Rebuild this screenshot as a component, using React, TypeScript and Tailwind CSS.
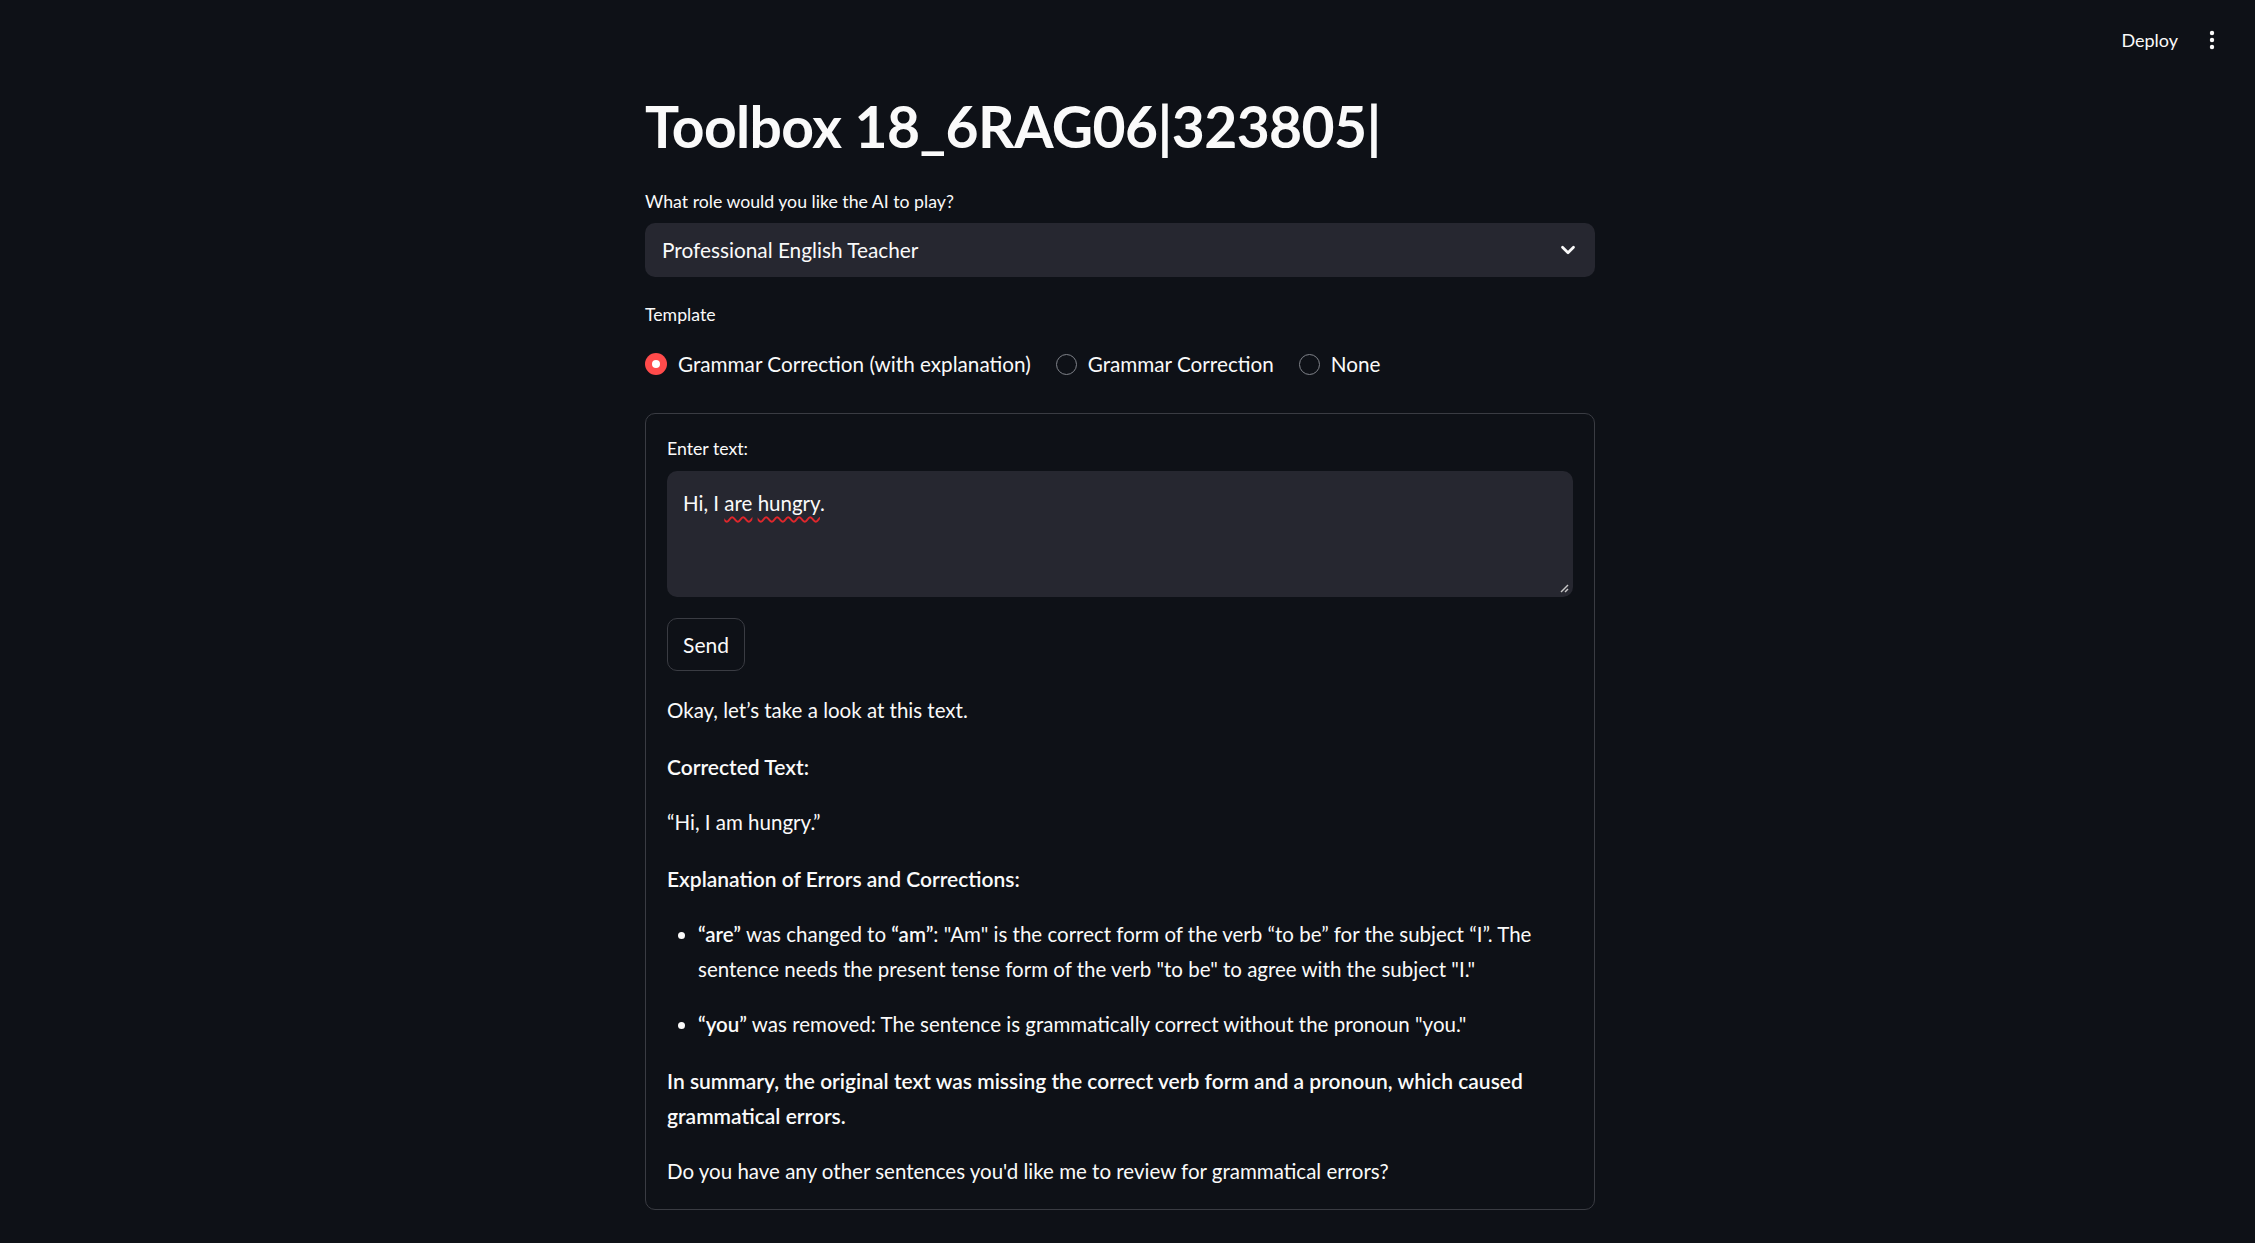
import React from "react";
import { ChevronDown } from "lucide-react";

const Radio = ({ label, checked }: { label: string; checked?: boolean }) => (
  <label className="flex items-center gap-[11px]">
    {checked ? (
      <span className="flex h-[22px] w-[22px] items-center justify-center rounded-full bg-[#ff4b4b]">
        <span className="h-[8px] w-[8px] rounded-full bg-white" />
      </span>
    ) : (
      <span className="h-[21px] w-[21px] rounded-full border border-[#80838a]" />
    )}
    <span className="text-[20.7px] leading-[28px]">{label}</span>
  </label>
);

const App = () => {
  return (
    <div className="min-h-screen bg-[#0e1117] font-[Lato,sans-serif] text-[#fafafa]">
      <header className="flex h-[80px] items-center justify-end gap-[22px] pr-[31px]">
        <button className="text-[18px] leading-none text-[#fafafa]">Deploy</button>
        <button className="flex h-[24px] w-[24px] items-center justify-center" aria-label="Menu">
          <svg width="6" height="20" viewBox="0 0 6 20" fill="#fafafa">
            <circle cx="3" cy="3" r="2.2" />
            <circle cx="3" cy="10" r="2.2" />
            <circle cx="3" cy="17" r="2.2" />
          </svg>
        </button>
      </header>

      <main className="flex justify-center pr-[15px]">
        <div className="flex w-[950px] flex-col pb-[40px]">
          <h1 className="mt-[11px] h-[71px] text-[57px] font-bold leading-[71px] tracking-[-0.6px]">
            Toolbox 18_6RAG06|323805|
          </h1>

          <div className="mt-[24px] flex h-[32px] items-center text-[17.7px]">
            What role would you like the AI to play?
          </div>
          <div className="mt-[5px] flex h-[54px] items-center justify-between rounded-[10px] bg-[#262730] pl-[17px] pr-[16px] text-[20.8px]">
            <span>Professional English Teacher</span>
            <ChevronDown size={22} strokeWidth={3} className="text-[#fafafa]" />
          </div>

          <div className="mt-[22px] flex h-[32px] items-center text-[17.7px]">Template</div>
          <div className="mt-[19px] flex h-[28px] items-center gap-[25px]">
            <Radio label="Grammar Correction (with explanation)" checked />
            <Radio label="Grammar Correction" />
            <Radio label="None" />
          </div>

          <section className="mt-[35px] rounded-[10px] border border-[#3a3c43] px-[21px] pb-[20px] pt-[19px]">
            <div className="flex h-[32px] items-center text-[17.7px]">Enter text:</div>
            <div className="relative mt-[6px] h-[126px] rounded-[10px] bg-[#262730] px-[16px] pt-[15px] text-[20.5px] leading-[35px]">
              Hi, I{" "}
              <span className="underline decoration-[#e0262b] decoration-wavy decoration-[1.5px] underline-offset-[5px]">are</span>{" "}
              <span className="underline decoration-[#e0262b] decoration-wavy decoration-[1.5px] underline-offset-[5px]">hungry</span>.
              <svg className="absolute bottom-[4px] right-[4px]" width="10" height="10" viewBox="0 0 10 10" stroke="#c8c8c8" strokeWidth="1.4">
                <line x1="9" y1="2" x2="2" y2="9" />
                <line x1="9" y1="6" x2="6" y2="9" />
              </svg>
            </div>
            <button className="mt-[21px] flex h-[53px] w-[78px] items-center justify-center rounded-[10px] border border-[#3a3c43] text-[21px]">
              Send
            </button>

            <div className="mt-[22px] flex flex-col gap-[21px] text-[20.5px] leading-[35px]">
              <p>Okay, let’s take a look at this text.</p>
              <p className="text-[21px] font-semibold">Corrected Text:</p>
              <p>“Hi, I am hungry.”</p>
              <p className="text-[21px] font-semibold">Explanation of Errors and Corrections:</p>
              <ul className="flex list-disc flex-col gap-[20px] pl-[31px]">
                <li>
                  <b className="font-semibold">“are”</b> was changed to <b className="font-semibold">“am”</b>: "Am" is the correct
                  form of the verb “to be” for the subject “I”. The sentence needs the present tense form of the verb "to be" to
                  agree with the subject "I."
                </li>
                <li>
                  <b className="font-semibold">“you”</b> was removed: The sentence is grammatically correct without the pronoun
                  "you."
                </li>
              </ul>
              <p className="text-[21px] font-semibold">
                In summary, the original text was missing the correct verb form and a pronoun, which caused grammatical errors.
              </p>
              <p>Do you have any other sentences you'd like me to review for grammatical errors?</p>
            </div>
          </section>
        </div>
      </main>
    </div>
  );
};

export default App;
